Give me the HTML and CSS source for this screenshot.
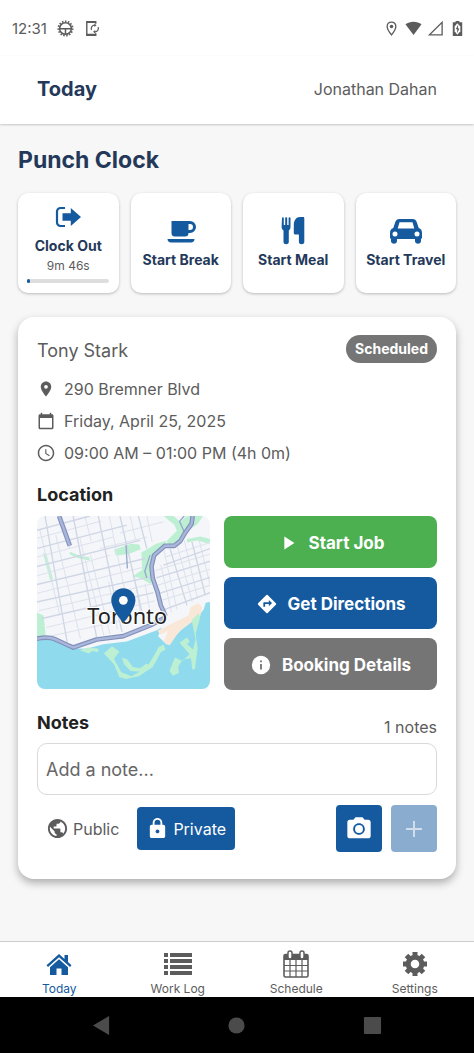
FILE: index.html
```html
<!DOCTYPE html>
<html lang="en">
  <head>
    <meta charset="UTF-8" />
    <meta name="viewport" content="width=device-width, initial-scale=1.0" />
    <title>Today</title>
    <link rel="stylesheet" href="styles.css">
  </head>
  <body>
    <div class="status-bar">
      <span class="time">12:31</span>
      <svg class="status-icon" viewBox="0 0 18 18" fill="none" stroke="#5c5c5c">
        <circle cx="9" cy="9" r="7.600" stroke-width="1.800" stroke-dasharray="1.600 1.580" />
        <circle cx="9" cy="9" r="6.200" stroke-width="1.600" />
        <path d="M3 9.200h12M9 9.500v5.500" stroke-width="1.600" />
      </svg>
      <svg class="status-icon" viewBox="0 0 18 18" fill="none" stroke="#5c5c5c">
        <path d="M13.500 4V1.800H4v14.400h9.500V14" stroke-width="1.500" />
        <path d="M4 2.200h9.500M4 15.500h9.500" stroke-width="2" />
        <path d="M9 10.500a3.600 3.600 0 0 1 3.500-5M16 7.500a3.600 3.600 0 0 1-3.500 5" stroke-width="1.300" />
        <path d="M12 3.800l2.400 1.800-2.400 1.800zM13 10.600l-2.400 1.800 2.400 1.800z" fill="#5c5c5c" stroke="none" />
      </svg>
      <div class="status-right">
        <svg class="status-icon" viewBox="0 0 18 18">
          <path d="M9 2.200c-2.700 0-4.600 2-4.600 4.600C4.400 10 9 15.800 9 15.800s4.600-5.800 4.600-9c0-2.600-1.900-4.600-4.600-4.600z" fill="none" stroke="#5c5c5c" stroke-width="1.400" />
          <circle cx="9" cy="6.800" r="1.900" fill="#5c5c5c" />
        </svg>
        <svg class="status-icon" viewBox="0 0 18 18">
          <path d="M.5 4.500C5 .8 13 .8 17.500 4.500L9 16z" fill="#5c5c5c" />
        </svg>
        <svg class="status-icon" viewBox="0 0 18 18">
          <path d="M16 2.500v13.200H2.600z" fill="none" stroke="#5c5c5c" stroke-width="1.400" />
        </svg>
        <svg class="status-icon" viewBox="0 0 18 18">
          <path d="M7 1h4v1.500h3v14.500H4V2.500h3z" fill="#5c5c5c" />
          <path d="M8.800 3.500L6 7v5l2.800 3.500L12 12V7z" fill="#fff" />
          <path d="M9.600 5L7.200 9.800h1.500V14l2.300-5H9.600z" fill="#5c5c5c" />
        </svg>
      </div>
    </div>

    <header class="header">
      <h1>Today</h1>
      <span class="user">Jonathan Dahan</span>
    </header>

    <main>
      <h2>Punch Clock</h2>
      <div class="punch-list">
        <button class="punch">
          <svg class="punch-icon" viewBox="0 0 30 28" fill="#155a9f">
            <path d="M12 5H7.500a3.500 3.500 0 0 0-3.500 3.500v11A3.500 3.500 0 0 0 7.500 23H12" fill="none" stroke="#155a9f" stroke-width="2.200" />
            <path d="M9.500 10.300h8.300V5L28 14l-10.200 9v-5.300H9.500z" />
          </svg>
          <span>Clock Out</span>
          <small>9m 46s</small>
          <progress value="3" max="100" aria-label="Shift progress"></progress>
        </button>
        <button class="punch">
          <svg class="punch-icon" viewBox="0 0 30 28" fill="#155a9f">
            <path d="M5.500 4H24a6 6 0 0 1 0 12h-1.500a3.500 3.500 0 0 1-3.500 3.500H9A3.500 3.500 0 0 1 5.500 16zM22.500 7v6H24a3 3 0 0 0 0-6z" fill-rule="evenodd" />
            <path d="M1.500 22h27c0 2-1.500 3.500-3.500 3.500H5c-2 0-3.500-1.500-3.500-3.500z" />
          </svg>
          <span>Start Break</span>
        </button>
        <button class="punch">
          <svg class="punch-icon" viewBox="0 0 30 28" fill="#155a9f">
            <path d="M4 1c0-1 1.800-1 1.800 0v7h1.400V1c0-1 2-1 2 0v7h1.400V1c0-1 1.900-1 1.900 0v9c0 2-1 3-1.700 3.600V25c0 3-5.300 3-5.300 0V13.600C4.800 13 3.600 12 3.600 10z" />
            <path d="M15.800 8c0-4.500 2.500-8 6-8H25c1 0 1.300.5 1.300 1.300V25c0 3-5.400 3-5.400 0v-7.500h-3.700c-1 0-1.400-.5-1.400-1.400z" />
          </svg>
          <span>Start Meal</span>
        </button>
        <button class="punch">
          <svg class="punch-icon wide" viewBox="0 0 34 28" fill="#155a9f">
            <path d="M10.500 2h13c2.300 0 3.500 1 4.200 3l2 6c2.300.7 3.300 2.500 3.300 5v5.500h-1V24c0 3.500-6 3.500-6 0v-2H8v2c0 3.500-6 3.500-6 0v-2.500H1V16c0-2.500 1-4.300 3.300-5l2-6c.7-2 1.900-3 4.200-3zM10.500 5.300L8.700 11.500h16.600l-1.800-6.200zM6 14.500a2.500 2.500 0 1 0 0 5 2.500 2.500 0 0 0 0-5zM28 14.500a2.500 2.500 0 1 0 0 5 2.500 2.500 0 0 0 0-5z" fill-rule="evenodd" />
          </svg>
          <span>Start Travel</span>
        </button>
      </div>

      <section class="card">
        <div class="card-header">
          <h3 class="client">Tony Stark</h3>
          <span class="badge">Scheduled</span>
        </div>

        <ul class="details">
          <li>
            <svg viewBox="0 0 24 24" fill="#5c5c5c">
              <path d="M12 2C8.130 2 5 5.130 5 9c0 5.250 7 13 7 13s7-7.750 7-13c0-3.870-3.130-7-7-7zm0 9.500a2.500 2.500 0 0 1 0-5 2.500 2.500 0 0 1 0 5z" />
            </svg>
            290 Bremner Blvd
          </li>
          <li>
            <svg viewBox="0 0 24 24" fill="#5c5c5c">
              <path d="M20 3h-1V1h-2v2H7V1H5v2H4c-1.100 0-2 .9-2 2v16c0 1.100.9 2 2 2h16c1.100 0 2-.9 2-2V5c0-1.100-.9-2-2-2zm0 18H4V8h16v13z" />
            </svg>
            Friday, April 25, 2025
          </li>
          <li>
            <svg viewBox="0 0 24 24" fill="#5c5c5c">
              <path d="M12 1C6 1 1 6 1 12s5 11 11 11 11-5 11-11S18 1 12 1zm0 20c-5 0-9-4-9-9s4-9 9-9 9 4 9 9-4 9-9 9zm.5-14H11v6l5.200 3.200.8-1.300-4.500-2.700z" />
            </svg>
            09:00 AM – 01:00 PM (4h 0m)
          </li>
        </ul>

        <h3>Location</h3>
        <div class="location">
          <svg class="map" viewBox="21 33 519 517" preserveAspectRatio="xMidYMid slice" role="img" aria-label="Map of Toronto">
            <rect class="land" x="21" y="33" width="519" height="517" />

            <!-- parks -->
            <g class="park">
              <path d="M21 322L42 330 48 392 21 396z" />
              <path d="M40 144l10 2 20 76-9 2z" />
              <path d="M120 140l30 12 28 4 2 10-32-6-28-12z" />
              <path d="M252 134l50-18 26 2 4 14-34 14-40 6z" />
              <path d="M334 142l44-26 28-8 4 20-36 22-16 34 6 54-34-20-24-4 30-20z" />
              <path d="M400 33h30l20 18 20-18h48l-16 24-28 20-20 30-34 14-12-12 32-32-8-18z" />
              <path d="M470 102l40-8 30 8v14l-40-10-30 6z" />
            </g>

            <!-- minor streets -->
            <g class="lane">
              <path d="M21 100L215 48M21 156L250 96M21 212L240 150M21 264L340 186M28 316L365 236M50 366L375 286M60 392L300 340M210 130L350 96M270 84L400 50" />
              <path d="M30 72L90 330M78 90L152 400M94 33L120 130M150 100L222 390M165 33L184 108M182 150L240 385M238 33L300 330M236 230L262 370M300 33L318 110M318 240L332 330M350 33L366 110M345 236L362 330" />
              <path d="M376 196L540 146M382 240L540 192M390 286L540 240M404 156L540 112" />
              <path d="M400 130L440 312M440 118L486 290M462 106L502 280M505 100L540 240M392 180L424 320" />
            </g>

            <!-- major streets -->
            <g class="street">
              <path d="M21 76L180 33M21 130L290 60M21 184L330 106M21 238L345 160M21 290L360 215M34 340L370 262" />
              <path d="M46 33L112 410M130 33L200 395M205 33L276 380M270 33L340 340M325 33L350 130" />
              <path d="M378 218L540 168M388 264L540 216M400 180L540 130M404 312L540 262M420 132L470 300M485 110L525 270" />
            </g>

            <!-- lake -->
            <path class="water" d="M21 405L65 401 120 428 170 430 220 416 290 408 380 374 394 366 384 392 410 418 452 374 500 336 520 312 526 292 540 290V550H21z" />
            <path class="sand" d="M382 376l92-46 8-26 22-10 12 12-6 26-62 44-30 44-18-12 14-32-22 12z" />
            <path class="park" d="M150 434l24-8 32 4-2 10-16-4-12 8zM222 444l24-22 22 16-16 22 22 40 30 12 44-24 24-38 14-26 14-6 6 14-14 8-24 44-42 28-38 8-20-6-16-38z" />
            <path class="park" d="M276 456l16 6 16 22 22 4 20-14 8 8-26 16-30-2-20-20z" />
            <path class="park" d="M484 344l20-20 6 10-14 50 6 44-8 62-8 2-4-34-24 4-14 20 2 20-18 8-10-14 16-40 22 10 22-20-30-34 22-16 8 12-8 8 18 16 8-30z" />

            <!-- creeks and highways -->
            <path class="creek" d="M288 120l4 70M360 150l-16 48 6 20M462 33l-14 16 16 36" />
            <g class="highway-edge">
              <path d="M88 33L120 122" />
              <path d="M487 33L484 56 464 84 450 108 432 122 404 122 372 150 364 184 368 220 382 260 392 300 406 332" />
              <path d="M21 400C70 388 80 406 130 426L200 402 280 392 360 360 406 336" />
            </g>
            <g class="highway">
              <path d="M88 33L120 122" />
              <path d="M487 33L484 56 464 84 450 108 432 122 404 122 372 150 364 184 368 220 382 260 392 300 406 332" />
              <path d="M21 400C70 388 80 406 130 426L200 402 280 392 360 360 406 336" />
            </g>

            <text class="city" x="172" y="356">Toronto</text>
            <path class="pin" d="M280 249a36 36 0 0 0-36 36c0 28 36 68 36 68s36-40 36-68a36 36 0 0 0-36-36z" />
            <circle cx="280" cy="285" r="13" fill="#fff" />
          </svg>

          <div class="actions">
            <button class="btn btn-start">
              <svg viewBox="0 0 24 24" fill="#fff"><path d="M8 5v14l11-7z" /></svg>
              Start Job
            </button>
            <button class="btn btn-directions">
              <svg viewBox="0 0 24 24" fill="#fff">
                <path d="M21.710 11.290l-9-9a1 1 0 0 0-1.410 0l-9 9a1 1 0 0 0 0 1.410l9 9c.39.39 1.020.39 1.410 0l9-9a1 1 0 0 0 0-1.410zM14 14.500V12h-4v3H8v-4c0-.55.45-1 1-1h5V7.500l3.500 3.500-3.500 3.500z" />
              </svg>
              Get Directions
            </button>
            <button class="btn btn-details">
              <svg viewBox="0 0 24 24" fill="#fff">
                <path d="M12 2a10 10 0 1 0 0 20 10 10 0 0 0 0-20zm1 15h-2v-6h2v6zm0-8h-2V7h2v2z" />
              </svg>
              Booking Details
            </button>
          </div>
        </div>

        <div class="notes-header">
          <h3><label for="note">Notes</label></h3>
          <span>1 notes</span>
        </div>
        <input class="note-input" id="note" type="text" placeholder="Add a note..." />
        <div class="note-tools">
          <input type="radio" name="visibility" id="public" />
          <label class="visibility" for="public">
            <svg viewBox="0 0 24 24" fill="currentColor">
              <path d="M12 2C6.480 2 2 6.480 2 12s4.480 10 10 10 10-4.480 10-10S17.520 2 12 2zm-1 17.930c-3.950-.49-7-3.850-7-7.930 0-.62.08-1.210.21-1.790L9 15v1c0 1.100.9 2 2 2v1.930zm6.900-2.540c-.26-.81-1-1.390-1.900-1.390h-1v-3c0-.55-.45-1-1-1H8v-2h2c.55 0 1-.45 1-1V7h2c1.100 0 2-.9 2-2v-.41c2.930 1.190 5 4.060 5 7.410 0 2.080-.8 3.970-2.100 5.390z" />
            </svg>
            Public
          </label>
          <input type="radio" name="visibility" id="private" checked />
          <label class="visibility" for="private">
            <svg viewBox="0 0 24 24" fill="currentColor">
              <path d="M18 8h-1V6c0-2.760-2.240-5-5-5S7 3.240 7 6v2H6c-1.100 0-2 .9-2 2v10c0 1.100.9 2 2 2h12c1.100 0 2-.9 2-2V10c0-1.100-.9-2-2-2zm-6 9c-1.100 0-2-.9-2-2s.9-2 2-2 2 .9 2 2-.9 2-2 2zm3.100-9H8.900V6c0-1.710 1.390-3.100 3.100-3.100s3.100 1.390 3.100 3.100v2z" />
            </svg>
            Private
          </label>
          <button class="icon-btn camera" aria-label="Add photo">
            <svg viewBox="0 0 24 24" fill="#fff">
              <path d="M9 2L7.170 4H4c-1.100 0-2 .9-2 2v12c0 1.100.9 2 2 2h16c1.100 0 2-.9 2-2V6c0-1.100-.9-2-2-2h-3.170L15 2H9zm3 15c-2.760 0-5-2.240-5-5s2.240-5 5-5 5 2.240 5 5-2.240 5-5 5z" />
              <circle cx="12" cy="12" r="3.400" />
            </svg>
          </button>
          <button class="icon-btn" aria-label="Add note" disabled>
            <svg viewBox="0 0 24 24" fill="#fff"><path d="M20 13h-7v7h-2v-7H4v-2h7V4h2v7h7z" /></svg>
          </button>
        </div>
      </section>
    </main>

    <nav class="tabs">
      <a class="tab active" href="#today">
        <svg viewBox="0 0 28 28" fill="currentColor">
          <path d="M14 4l5.500 5V5H23v7l3.500 3.200-1.500 1.800L14 7.300 3 17l-1.500-1.800z" />
          <path d="M14 9.300l9 8V25h-6.500v-6.500h-5V25H5v-7.700z" />
        </svg>
        Today
      </a>
      <a class="tab" href="#work-log">
        <svg viewBox="0 0 28 28" fill="currentColor">
          <path d="M0 3h4v4H0zM6 3h22v4H6zM0 9h4v4H0zM6 9h22v4H6zM0 15h4v4H0zM6 15h22v4H6zM0 21h4v4H0zM6 21h22v4H6z" />
        </svg>
        Work Log
      </a>
      <a class="tab" href="#schedule">
        <svg viewBox="0 0 28 28" fill="none" stroke="currentColor">
          <rect x="2" y="4.500" width="24" height="22.500" rx="1.500" stroke-width="1.600" />
          <path d="M2 7.500h24" stroke-width="5" />
          <path d="M2 15.500h24M2 21h24M8 10v17M14 10v17M20 10v17" stroke-width="1.200" />
          <path d="M8 3v4M20 3v4" stroke-width="5.500" stroke-linecap="round" />
          <path d="M8 3v4M20 3v4" stroke="#fff" stroke-width="2.600" stroke-linecap="round" />
        </svg>
        Schedule
      </a>
      <a class="tab" href="#settings">
        <svg viewBox="0 0 28 28" fill="none" stroke="currentColor">
          <circle cx="14" cy="14" r="6.800" stroke-width="5" />
          <path d="M14 2v4M14 22v4M2 14h4M22 14h4M5.500 5.500l3 3M19.500 19.500l3 3M22.500 5.500l-3 3M8.500 19.500l-3 3" stroke-width="5" />
        </svg>
        Settings
      </a>
    </nav>

    <div class="system-bar">
      <svg viewBox="0 0 20 20" fill="#4b4b4b"><path d="M1 10L18 0v20z" /></svg>
      <svg viewBox="0 0 20 20" fill="#4b4b4b"><circle cx="10" cy="10" r="8.500" /></svg>
      <svg viewBox="0 0 20 20" fill="#4b4b4b"><rect x="1" y="1" width="18" height="18" rx="1" /></svg>
    </div>
  </body>
</html>
```
FILE: styles.css
```css
* {
  margin: 0;
  padding: 0;
  box-sizing: border-box;
  font-family: Inter, "Liberation Sans", sans-serif;
}
body {
  display: flex;
  flex-direction: column;
  min-height: 100vh;
  background: #f7f7f7;
  color: #5c5c5c;
  font-size: 16px;
}
svg {
  display: block;
  flex-shrink: 0;
}
button {
  border: none;
  cursor: pointer;
}

/* top */
.status-bar {
  display: flex;
  align-items: center;
  gap: 9px;
  height: 56px;
  padding: 0 8px 0 12px;
  background: #fff;
}
.time {
  margin-right: 1px;
  font-size: 15px;
}
.status-icon {
  width: 17px;
  height: 17px;
}
.status-right {
  display: flex;
  gap: 5px;
  margin-left: auto;
}
.header {
  display: flex;
  justify-content: space-between;
  align-items: center;
  height: 68px;
  padding: 0 37px;
  padding-bottom: 3px;
  background: #fff;
  box-shadow: 0 1px 2px rgba(0, 0, 0, 0.2);
}
h1 {
  font-size: 20px;
  color: #24395a;
}
main {
  flex: 1;
  padding: 20px 18px;
}
h2 {
  margin-bottom: 17px;
  font-size: 23px;
  line-height: 32px;
  color: #24395a;
}

/* punch clock */
.punch-list {
  display: grid;
  grid-template-columns: repeat(4, 1fr);
  gap: 12px;
}
.punch {
  display: flex;
  flex-direction: column;
  align-items: center;
  justify-content: center;
  height: 100px;
  border-radius: 10px;
  background: #fff;
  box-shadow: 0 1px 3px rgba(0, 0, 0, 0.25);
  color: #24395a;
  font-size: 14px;
  font-weight: bold;
  line-height: 20px;
  white-space: nowrap;
}
.punch-icon {
  width: 30px;
  height: 28px;
  margin-bottom: 5px;
}
.punch-icon.wide {
  width: 34px;
}
.punch small {
  color: #5c5c5c;
  font-size: 12px;
  font-weight: normal;
}
progress {
  width: 82px;
  height: 4px;
  margin-top: 3px;
  appearance: none;
}
progress::-webkit-progress-bar {
  border-radius: 2px;
  background: #dedede;
}
progress::-webkit-progress-value {
  border-radius: 2px;
  background: #155a9f;
}

/* job card */
.card {
  margin-top: 24px;
  padding: 18px 19px 27px;
  border-radius: 16px;
  background: #fff;
  box-shadow: 0 4px 8px rgba(0, 0, 0, 0.3);
}
.card-header {
  display: flex;
  justify-content: space-between;
  align-items: flex-end;
  margin-bottom: 14px;
}
h3 {
  color: #222;
  font-size: 18px;
  line-height: 24px;
}
.client {
  color: #5c5c5c;
  font-weight: normal;
}
.badge {
  padding: 0 9px;
  border-radius: 14px;
  background: #757575;
  color: #fff;
  font-size: 14px;
  font-weight: bold;
  line-height: 28px;
}
.details {
  display: grid;
  gap: 8px;
  margin-bottom: 18px;
  list-style: none;
}
.details li {
  display: flex;
  align-items: center;
  gap: 9px;
  line-height: 24px;
}
.details svg {
  width: 18px;
  height: 18px;
}
.location {
  display: grid;
  grid-template-columns: 13fr 16fr;
  align-items: start;
  gap: 14px;
  margin-top: 9px;
}
.actions {
  display: grid;
  gap: 9px;
}
.btn {
  display: flex;
  align-items: center;
  justify-content: center;
  gap: 10px;
  height: 52px;
  padding-top: 2px;
  border-radius: 8px;
  color: #fff;
  font-size: 17px;
  font-weight: bold;
}
.btn svg {
  width: 22px;
  height: 22px;
}
.btn-start {
  background: #4caf50;
}
.btn-directions {
  background: #155a9f;
}
.btn-details {
  background: #757575;
}

/* map */
.map {
  width: 100%;
  aspect-ratio: 1;
  border-radius: 8px;
}
.land {
  fill: #f5f6fa;
}
.water {
  fill: #90daee;
}
.park {
  fill: #bdf0d3;
}
.sand {
  fill: #f9e8d8;
}
.lane {
  fill: none;
  stroke: #dde2ec;
  stroke-width: 3;
}
.street {
  fill: none;
  stroke: #cfd6e4;
  stroke-width: 4;
}
.creek {
  fill: none;
  stroke: #93a8cc;
  stroke-width: 4;
}
.highway-edge {
  fill: none;
  stroke: #8390ba;
  stroke-width: 14;
  stroke-linejoin: round;
}
.highway {
  fill: none;
  stroke: #a9b7db;
  stroke-width: 7;
  stroke-linejoin: round;
}
.city {
  fill: #222;
  stroke: #fff;
  stroke-width: 6;
  paint-order: stroke;
  font-family: "Noto Sans", sans-serif;
  font-size: 65px;
}
.pin {
  fill: #155a9f;
}

/* notes */
.notes-header {
  display: flex;
  justify-content: space-between;
  margin-top: 21px;
}
.notes-header span {
  padding-top: 4px;
  line-height: 24px;
}
.note-input {
  display: block;
  width: 100%;
  height: 52px;
  margin: 4px 0 10px;
  padding: 0 8px;
  border: 1px solid #d9d9d9;
  border-radius: 10px;
  font-size: 18px;
}
.note-input::placeholder {
  color: #666;
}
.note-tools {
  display: flex;
  align-items: center;
  gap: 9px;
}
.note-tools input {
  position: absolute;
  opacity: 0;
}
.visibility {
  display: flex;
  align-items: center;
  gap: 4px;
  height: 43px;
  padding: 0 9px;
  border-radius: 4px;
  cursor: pointer;
}
.visibility svg {
  width: 23px;
  height: 23px;
}
input:checked + .visibility {
  background: #155a9f;
  color: #fff;
}
.icon-btn {
  display: grid;
  place-items: center;
  width: 46px;
  height: 47px;
  border-radius: 4px;
  background: #155a9f;
}
.icon-btn svg {
  width: 28px;
  height: 28px;
}
.icon-btn:disabled {
  background: #8aadcf;
}
.icon-btn:disabled svg {
  width: 24px;
  height: 24px;
  opacity: 0.6;
}
.camera {
  margin-left: auto;
}

/* bottom */
.tabs {
  display: grid;
  grid-template-columns: repeat(4, 1fr);
  height: 56px;
  padding-top: 8px;
  border-top: 1px solid #ccc;
  background: #fff;
}
.tab {
  display: flex;
  flex-direction: column;
  align-items: center;
  color: #5c5c5c;
  font-size: 12px;
  line-height: 22px;
  text-decoration: none;
}
.tab.active {
  color: #155a9f;
}
.tab svg {
  width: 28px;
  height: 28px;
}
.system-bar {
  display: flex;
  justify-content: space-around;
  align-items: center;
  height: 56px;
  padding: 0 34px;
  background: #000;
}
.system-bar svg {
  width: 19px;
  height: 19px;
}
```
